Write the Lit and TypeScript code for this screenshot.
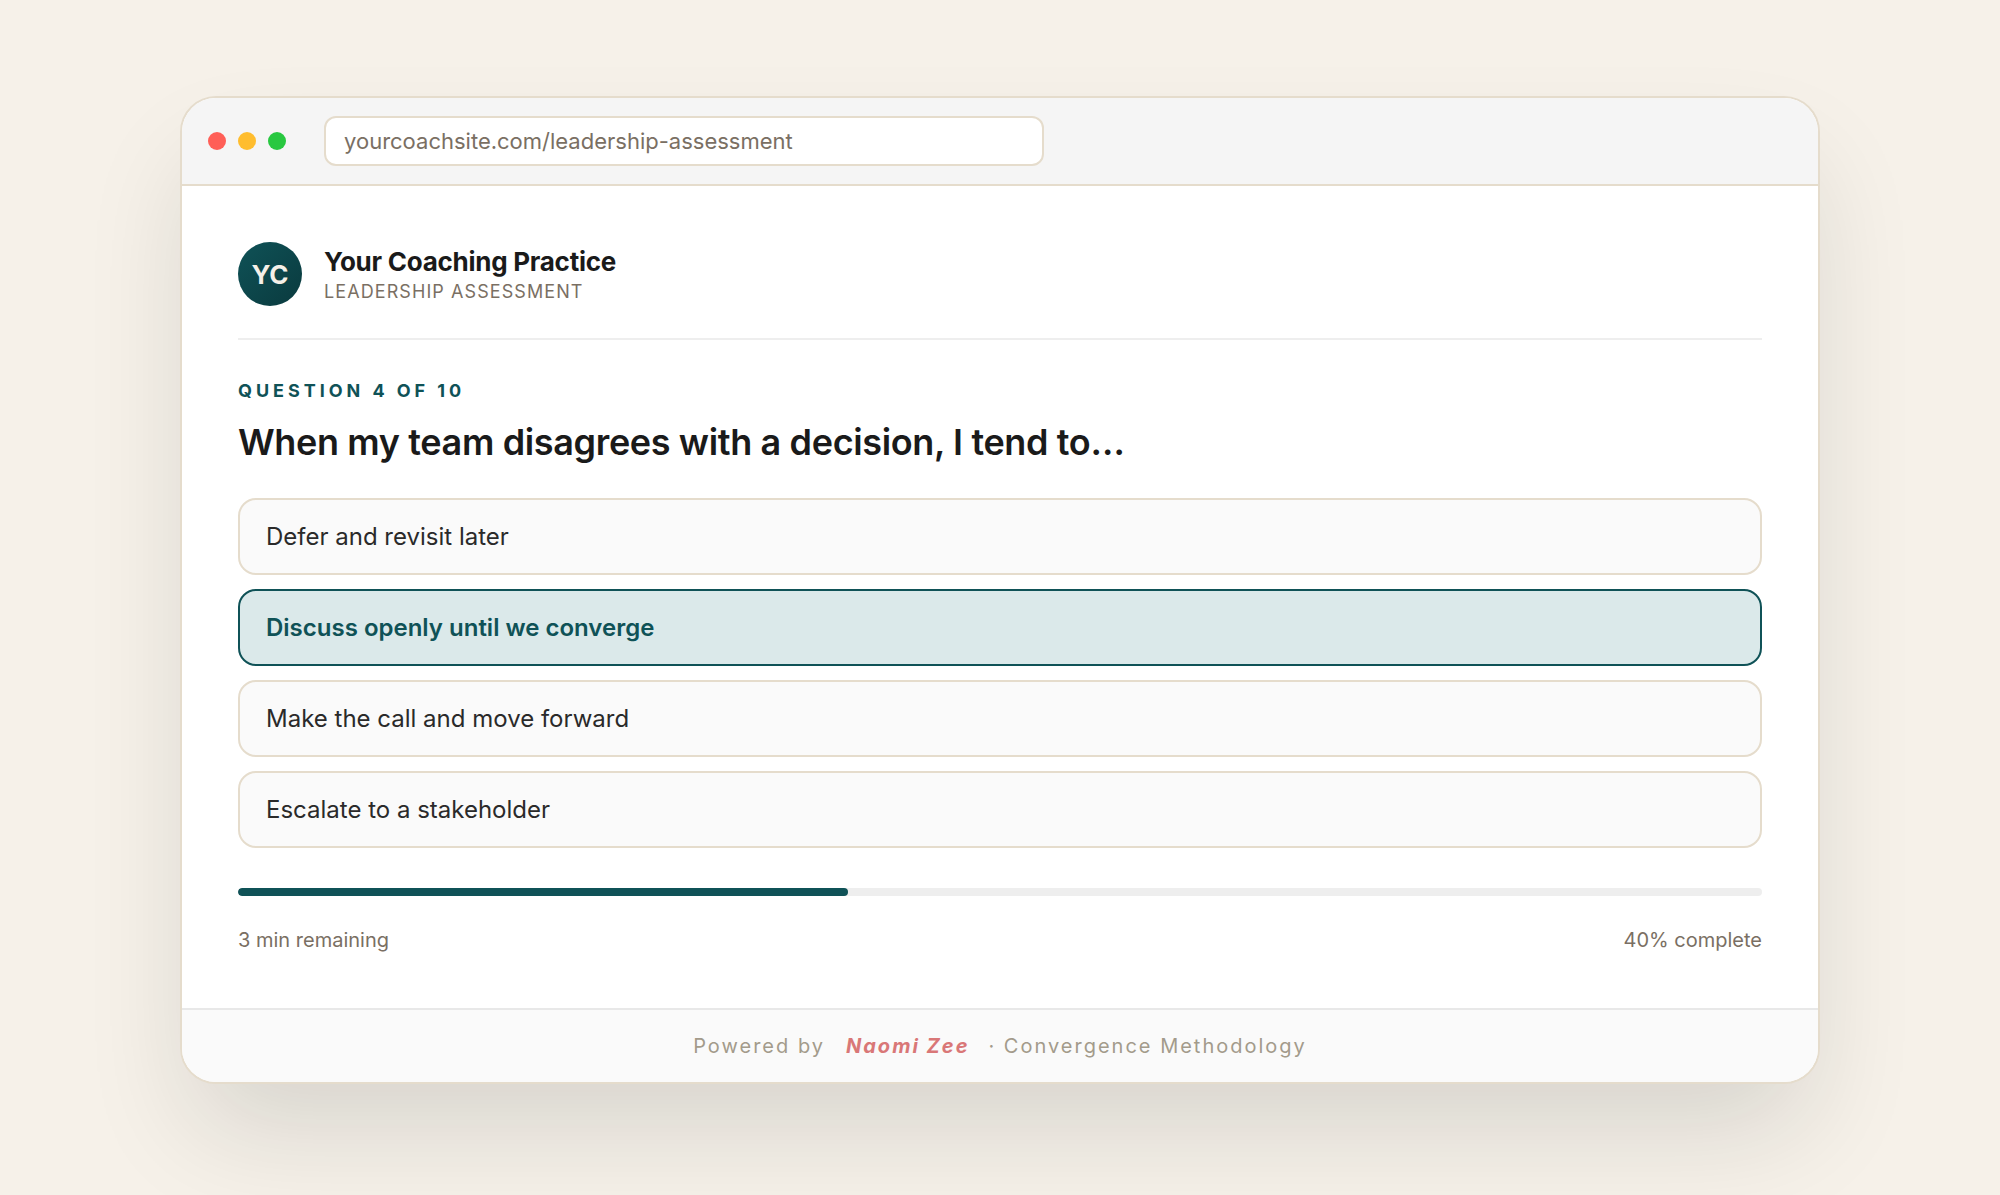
import { LitElement, html, css } from "lit";
import { customElement, state } from "lit/decorators.js";
import { classMap } from "lit/directives/class-map.js";

@customElement("app-root")
export class AppRoot extends LitElement {
  @state() private selected = 1;

  private readonly options = [
    "Defer and revisit later",
    "Discuss openly until we converge",
    "Make the call and move forward",
    "Escalate to a stakeholder",
  ];

  private readonly progress = 40;

  static styles = css`
    :host {
      display: flex;
      align-items: flex-start;
      justify-content: center;
      box-sizing: border-box;
      width: 100%;
      height: 1195px;
      padding-top: 96px;
      overflow: hidden;
      background: #f6f1e9;
      color: #1a1a1a;
      font-family: Inter, "Liberation Sans", sans-serif;
    }
    * {
      box-sizing: border-box;
    }
    .frame {
      width: 1640px;
      height: 988px;
      display: flex;
      flex-direction: column;
      border: 2px solid #e5dccc;
      border-radius: 36px;
      background: #fff;
      overflow: hidden;
      box-shadow: 0 56px 112px -16px rgba(20, 28, 26, 0.14);
    }
    .bar {
      display: flex;
      align-items: center;
      gap: 12px;
      height: 88px;
      padding: 0 26px;
      background: #f5f5f5;
      border-bottom: 2px solid #e5dccc;
    }
    .dot {
      width: 18px;
      height: 18px;
      border-radius: 50%;
    }
    .red {
      background: #ff5f57;
    }
    .yellow {
      background: #ffbd2e;
    }
    .green {
      background: #28c840;
    }
    .url {
      width: 720px;
      height: 50px;
      margin-left: 26px;
      padding: 0 18px;
      border: 2px solid #e5dccc;
      border-radius: 12px;
      background: #fff;
      color: #7a6f63;
      font-size: 22px;
      line-height: 46px;
    }
    .body {
      flex: 1;
      padding: 56px;
    }
    .brand {
      display: flex;
      align-items: center;
      gap: 22px;
      padding-bottom: 32px;
      border-bottom: 2px solid #eee;
    }
    .avatar {
      display: grid;
      place-items: center;
      width: 64px;
      height: 64px;
      border-radius: 50%;
      background: linear-gradient(135deg, #0f5257, #0a3a3e);
      color: #f5f0e8;
      font-size: 26px;
      font-weight: 700;
    }
    .name {
      font-size: 26px;
      font-weight: 700;
      line-height: 31px;
      letter-spacing: -0.26px;
    }
    .sub {
      color: #7a6f63;
      font-size: 18px;
      line-height: 22px;
      letter-spacing: 1.08px;
      margin-top: 4px;
    }
    .step {
      margin-top: 40px;
      color: #0f5257;
      font-size: 18px;
      font-weight: 700;
      line-height: 22px;
      letter-spacing: 3.96px;
    }
    .question {
      margin: 16px 0 32px;
      font-size: 36px;
      font-weight: 600;
      line-height: 48px;
      letter-spacing: -0.36px;
    }
    .options {
      display: flex;
      flex-direction: column;
      gap: 14px;
    }
    .option {
      height: 77px;
      padding: 22px 26px;
      border: 2px solid #e5dccc;
      border-radius: 18px;
      background: #fafafa;
      color: #2a2a2a;
      font-size: 24px;
      line-height: 29px;
      cursor: pointer;
    }
    .option.selected {
      border-color: #0f5257;
      background: #dbe9ea;
      color: #0f5257;
      font-weight: 600;
    }
    .track {
      height: 8px;
      margin-top: 40px;
      border-radius: 4px;
      background: #eee;
      overflow: hidden;
    }
    .fill {
      height: 100%;
      border-radius: 4px;
      background: #0f5257;
    }
    .meta {
      display: flex;
      justify-content: space-between;
      margin-top: 32px;
      color: #7a6f63;
      font-size: 20px;
      line-height: 24px;
    }
    .footer {
      display: flex;
      justify-content: center;
      gap: 20px;
      height: 74px;
      padding: 24px 0;
      border-top: 2px solid #e8e8e8;
      background: #fafafa;
      color: #a39b8b;
      font-size: 20px;
      line-height: 24px;
      letter-spacing: 2px;
    }
    .author {
      margin: 0 -1px 0 1px;
      color: #d97777;
      font-weight: 700;
      font-style: italic;
    }
  `;

  render() {
    return html`
      <div class="frame">
        <div class="bar">
          <span class="dot red"></span>
          <span class="dot yellow"></span>
          <span class="dot green"></span>
          <div class="url">yourcoachsite.com/leadership-assessment</div>
        </div>
        <div class="body">
          <div class="brand">
            <div class="avatar">YC</div>
            <div>
              <div class="name">Your Coaching Practice</div>
              <div class="sub">LEADERSHIP ASSESSMENT</div>
            </div>
          </div>
          <div class="step">QUESTION 4 OF 10</div>
          <div class="question">When my team disagrees with a decision, I tend to…</div>
          <div class="options">
            ${this.options.map(
              (label, i) => html`<div
                class=${classMap({ option: true, selected: i === this.selected })}
                @click=${() => (this.selected = i)}
              >${label}</div>`
            )}
          </div>
          <div class="track"><div class="fill" style="width:${this.progress}%"></div></div>
          <div class="meta">
            <span>3 min remaining</span>
            <span>${this.progress}% complete</span>
          </div>
        </div>
        <div class="footer">
          <span>Powered by</span>
          <span class="author">Naomi Zee</span>
          <span>· Convergence Methodology</span>
        </div>
      </div>
    `;
  }
}
